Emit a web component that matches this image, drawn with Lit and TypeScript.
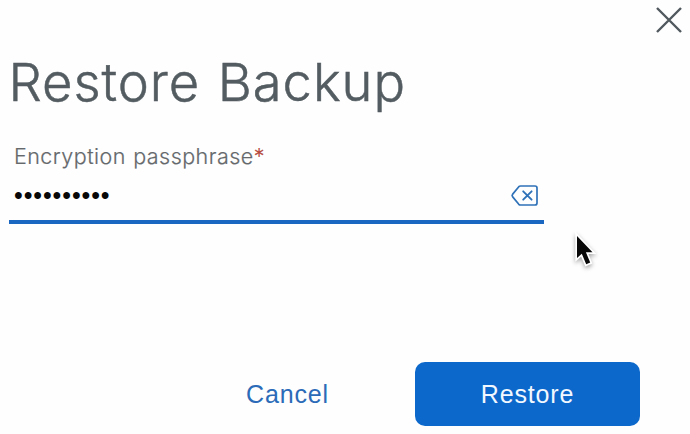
import { LitElement, html, css } from "lit";
import { customElement, state } from "lit/decorators.js";

@customElement("app-root")
export class AppRoot extends LitElement {
  @state() private passphrase = "passphrase";

  static styles = css`
    :host {
      display: flex;
      flex-direction: column;
      position: relative;
      box-sizing: border-box;
      width: 690px;
      height: 434px;
      overflow: hidden;
      background: #fefefe;
      font-family: Inter, "Liberation Sans", sans-serif;
    }
    button {
      border: 0;
      padding: 0;
      background: none;
      font: 400 25px/64px "Liberation Sans", sans-serif;
      letter-spacing: 0.85px;
    }
    svg { display: block; }
    .top {
      display: flex;
      justify-content: flex-end;
      height: 50px;
      padding: 6px 7px 0 0;
      box-sizing: border-box;
    }
    .close { width: 28px; height: 28px; }
    h1 {
      margin: 0 0 0 8.5px;
      height: 65px;
      font-size: 52.5px;
      line-height: 65px;
      font-weight: 300;
      letter-spacing: 0.95px;
      word-spacing: 2px;
      color: #535c61;
      -webkit-text-stroke: 0.5px #535c61;
      white-space: nowrap;
    }
    .field {
      width: 535px;
      margin: 26px 0 0 9px;
      height: 83px;
      box-sizing: border-box;
      border-bottom: 4px solid #1967c1;
    }
    label {
      display: block;
      height: 30px;
      padding-left: 5px;
      font-size: 21.5px;
      line-height: 30px;
      font-weight: 300;
      letter-spacing: 0.45px;
      word-spacing: 1px;
      color: #65696c;
      -webkit-text-stroke: 0.2px currentColor;
      white-space: nowrap;
    }
    .required { color: #b5483b; }
    .entry {
      display: flex;
      align-items: center;
      height: 48px;
      padding: 0 5px 0 5px;
    }
    input {
      flex: 1;
      min-width: 0;
      height: 30px;
      padding: 0;
      border: 0;
      outline: 0;
      background: none;
      color: #080808;
      font: 25px "Liberation Sans", sans-serif;
      letter-spacing: 0.9px;
    }
    .actions {
      display: flex;
      justify-content: flex-end;
      margin-top: 138px;
      padding-right: 50px;
      height: 64px;
    }
    .cancel { width: 84px; margin-right: 85px; padding-right: 1px; color: #2b6bb8; }
    .restore {
      width: 225px;
      border-radius: 10px;
      background: #0c68cb;
      color: #f2f8ff;
    }
    .pointer {
      position: absolute;
      left: 570px;
      top: 229px;
      filter: drop-shadow(0 2px 2px rgba(0, 0, 0, 0.35));
    }
  `;

  render() {
    return html`
      <div class="top">
        <button class="close" aria-label="Close">
          <svg width="28" height="28" viewBox="0 0 28 28" fill="none" stroke="#50595e" stroke-width="2.4">
            <path d="M2 2L26 26M26 2L2 26" />
          </svg>
        </button>
      </div>
      <h1>Restore Backup</h1>
      <div class="field">
        <label for="pass">Encryption passphrase<span class="required">*</span></label>
        <div class="entry">
          <input id="pass" type="password" .value=${this.passphrase} />
          <svg width="29" height="24" viewBox="0 0 29 24" fill="none" stroke="#2f72b8" stroke-width="1.7" stroke-linejoin="round" stroke-linecap="round">
            <path d="M10.5 3H25Q27 3 27 5V20Q27 22 25 22H10.5Q9.5 22 8.8 21.3L2.7 13.9Q1.5 12.5 2.7 11.1L8.8 3.7Q9.5 3 10.5 3Z" />
            <path d="M13.2 8.3L21.6 16.7M21.6 8.3L13.2 16.7" stroke-width="1.9" />
          </svg>
        </div>
      </div>
      <div class="actions">
        <button class="cancel">Cancel</button>
        <button class="restore">Restore</button>
      </div>
      <svg class="pointer" width="30" height="42" viewBox="0 0 30 42">
        <path d="M7 7V29L11.8 24.8L16.2 35.2L20.2 33.5L15.9 23.3H22.5Z" fill="#080808" stroke="#fff" stroke-width="3.4" paint-order="stroke" stroke-linejoin="miter" />
      </svg>
    `;
  }
}
